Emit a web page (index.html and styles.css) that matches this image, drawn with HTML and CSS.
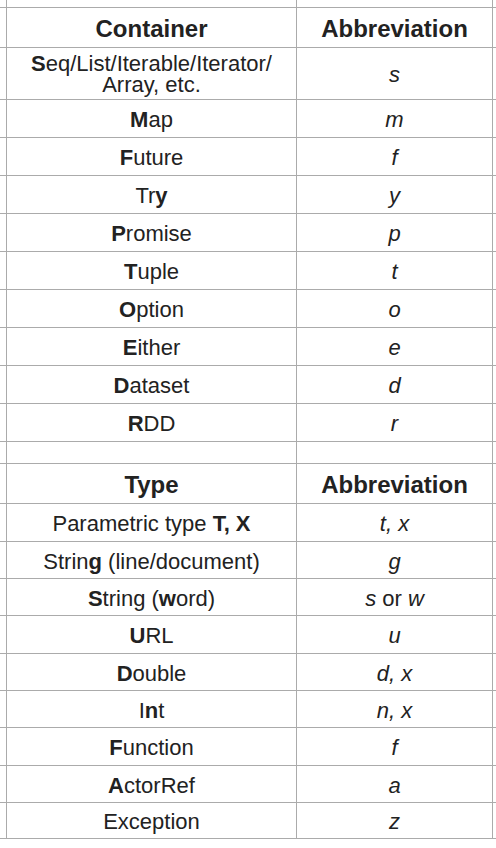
FILE: index.html
```html
<!DOCTYPE html>
<html>
<head>
<meta charset="utf-8">
<link rel="stylesheet" href="styles.css">
</head>
<body>
<div class="sheet">
  <div class="row r-top"><div class="c a"></div><div class="c b"></div><div class="c c2"></div><div class="c d"></div></div>

  <div class="row r40"><div class="c a"></div><div class="c b head">Container</div><div class="c c2 head">Abbreviation</div><div class="c d"></div></div>
  <div class="row r52"><div class="c a"></div><div class="c b wrap"><span class="ln"><b>S</b>eq/List/Iterable/Iterator/</span><span class="ln">Array, etc.</span></div><div class="c c2 ab">s</div><div class="c d"></div></div>
  <div class="row r38"><div class="c a"></div><div class="c b"><span><b>M</b>ap</span></div><div class="c c2 ab">m</div><div class="c d"></div></div>
  <div class="row r38"><div class="c a"></div><div class="c b"><span><b>F</b>uture</span></div><div class="c c2 ab">f</div><div class="c d"></div></div>
  <div class="row r38"><div class="c a"></div><div class="c b"><span>Tr<b>y</b></span></div><div class="c c2 ab">y</div><div class="c d"></div></div>
  <div class="row r38"><div class="c a"></div><div class="c b"><span><b>P</b>romise</span></div><div class="c c2 ab">p</div><div class="c d"></div></div>
  <div class="row r38"><div class="c a"></div><div class="c b"><span><b>T</b>uple</span></div><div class="c c2 ab">t</div><div class="c d"></div></div>
  <div class="row r38"><div class="c a"></div><div class="c b"><span><b>O</b>ption</span></div><div class="c c2 ab">o</div><div class="c d"></div></div>
  <div class="row r38"><div class="c a"></div><div class="c b"><span><b>E</b>ither</span></div><div class="c c2 ab">e</div><div class="c d"></div></div>
  <div class="row r38"><div class="c a"></div><div class="c b"><span><b>D</b>ataset</span></div><div class="c c2 ab">d</div><div class="c d"></div></div>
  <div class="row r38"><div class="c a"></div><div class="c b"><span><b>R</b>DD</span></div><div class="c c2 ab">r</div><div class="c d"></div></div>
  <div class="row r22"><div class="c a"></div><div class="c b"></div><div class="c c2"></div><div class="c d"></div></div>

  <div class="row r40"><div class="c a"></div><div class="c b head">Type</div><div class="c c2 head">Abbreviation</div><div class="c d"></div></div>
  <div class="row r38"><div class="c a"></div><div class="c b"><span>Parametric type <b>T, X</b></span></div><div class="c c2 ab">t, x</div><div class="c d"></div></div>
  <div class="row r37"><div class="c a"></div><div class="c b"><span>Strin<b>g</b> (line/document)</span></div><div class="c c2 ab">g</div><div class="c d"></div></div>
  <div class="row r37"><div class="c a"></div><div class="c b"><span><b>S</b>tring (<b>w</b>ord)</span></div><div class="c c2 ab"><span>s <span class="up">or</span> w</span></div><div class="c d"></div></div>
  <div class="row r38"><div class="c a"></div><div class="c b"><span><b>U</b>RL</span></div><div class="c c2 ab">u</div><div class="c d"></div></div>
  <div class="row r37"><div class="c a"></div><div class="c b"><span><b>D</b>ouble</span></div><div class="c c2 ab">d, x</div><div class="c d"></div></div>
  <div class="row r37"><div class="c a"></div><div class="c b"><span>I<b>n</b>t</span></div><div class="c c2 ab">n, x</div><div class="c d"></div></div>
  <div class="row r38"><div class="c a"></div><div class="c b"><span><b>F</b>unction</span></div><div class="c c2 ab">f</div><div class="c d"></div></div>
  <div class="row r37"><div class="c a"></div><div class="c b"><span><b>A</b>ctorRef</span></div><div class="c c2 ab">a</div><div class="c d"></div></div>
  <div class="row r36"><div class="c a"></div><div class="c b"><span>Exception</span></div><div class="c c2 ab">z</div><div class="c d"></div></div>
</div>
</body>
</html>
```

FILE: styles.css
```css
html, body {
  margin: 0;
  padding: 0;
  background: #ffffff;
}

body {
  width: 496px;
  height: 848px;
  overflow: hidden;
  font-family: "Liberation Sans", Arial, sans-serif;
  color: #222222;
}

.sheet {
  display: flex;
  flex-direction: column;
}

.row {
  display: grid;
  grid-template-columns: 7px 290px 196px 3px;
  box-sizing: border-box;
  border-bottom: 1px solid #ababab;
}

.r-top { height: 8px; }
.r40 { height: 40px; }
.r52 { height: 52px; }
.r38 { height: 38px; }
.r37 { height: 37px; }
.r36 { height: 36px; }
.r22 { height: 22px; }

.c {
  box-sizing: border-box;
  display: flex;
  align-items: center;
  justify-content: center;
  text-align: center;
  font-size: 22px;
  padding-top: 3px;
  white-space: nowrap;
}

.a, .b, .c2 {
  border-right: 1px solid #ababab;
}

.d {
  border-right: none;
}

.head {
  font-size: 24px;
  font-weight: bold;
  padding-top: 2px;
}

.wrap {
  flex-direction: column;
  padding-top: 0;
  line-height: 21px;
}

.ln {
  display: block;
  height: 21px;
}

.ab {
  font-style: italic;
}

.up {
  font-style: normal;
}

b {
  font-weight: bold;
}
```
